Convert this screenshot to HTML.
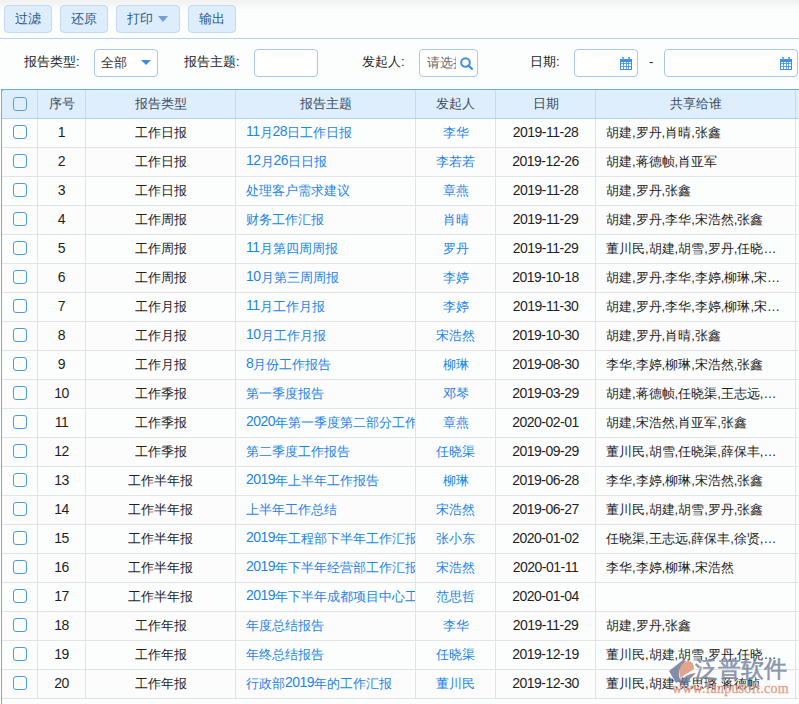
<!DOCTYPE html><html><head><meta charset="utf-8"><style>*{margin:0;padding:0;box-sizing:border-box}
html,body{width:799px;height:704px;overflow:hidden;background:#fcfefd;font-family:"Liberation Sans",sans-serif;font-size:13px;color:#333}
.top{position:absolute;left:0;top:0;width:799px;height:39px;background:linear-gradient(#f1f1f1 0,#f7f7f7 5px,#fbfcfc 10px,#fcfefd 14px,#fcfefd);border-bottom:1px solid #b9d2ea}
.btn{position:absolute;top:5px;height:28px;background:#deedfc;border:1px solid #c2d9ef;border-radius:4px;color:#2a5889;text-align:center;line-height:25px;font-size:13px}
.filter{position:absolute;left:0;top:39px;width:799px;height:50px;background:#fcfefd}
.lbl{position:absolute;top:14px;line-height:18px;color:#222}
.inp{position:absolute;top:10px;height:28px;border:1px solid #a9c8e8;border-radius:4px;background:#fff}
table{position:absolute;left:1px;top:89px;border-collapse:collapse;table-layout:fixed;width:824px}
th{height:29px;background:#dfeefc;color:#3b4c63;padding-bottom:1px;font-weight:normal;border:1px solid #c4dbef;border-bottom-color:#b5d2ec}
td{height:29px;border:1px solid #e3e3e3;text-align:center;white-space:nowrap;overflow:hidden;color:#1e1e1e;padding-bottom:1px}
td.c3,td.c4{color:#1e84ea}
tr:nth-child(even) td{background:#fcfefe}
tr:nth-child(odd) td{background:#fdfcfc}
td.c3{text-align:left;padding-left:10px}
td.c3 div{overflow:hidden;white-space:nowrap}
td.c6{text-align:left;padding-left:10px}
td.c6 div{overflow:hidden;white-space:nowrap;text-overflow:ellipsis}
.cb{display:inline-block;width:14px;height:14px;border:1px solid #4a9be0;border-radius:3px;background:transparent;vertical-align:middle;position:relative;top:-1px}
th .cb{border-color:#5f9bd3;top:0}
th:first-child,td.c0{border-left:1px solid #6daee6}
th{border-top:1px solid #6aaae2}

.n{font-size:14px;letter-spacing:-0.5px;position:relative;top:-1px}
</style></head><body><div class="top">
<div class="btn" style="left:4px;width:48px">过滤</div>
<div class="btn" style="left:60px;width:48px">还原</div>
<div class="btn" style="left:116px;width:64px"><span style="position:absolute;left:10px;top:0">打印</span><i style="position:absolute;left:41px;top:10px;width:0;height:0;border-left:5px solid transparent;border-right:5px solid transparent;border-top:6px solid #6f9fd3"></i></div>
<div class="btn" style="left:188px;width:48px">输出</div>
</div>
<div class="filter">
<span class="lbl" style="left:24px">报告类型:</span>
<div class="inp" style="left:94px;width:64px"><span style="position:absolute;left:6px;top:4px">全部</span><i style="position:absolute;left:46px;top:10px;width:0;height:0;border-left:5px solid transparent;border-right:5px solid transparent;border-top:5px solid #3d8de0"></i></div>
<span class="lbl" style="left:184px">报告主题:</span>
<div class="inp" style="left:254px;width:64px"></div>
<span class="lbl" style="left:362px">发起人:</span>
<div class="inp" style="left:419px;width:59px;overflow:hidden"><span style="position:absolute;left:7px;top:4px;width:29px;overflow:hidden;white-space:nowrap;color:#666">请选择</span><svg width="14" height="14" viewBox="0 0 14 14" style="position:absolute;left:39px;top:6px"><circle cx="6.5" cy="6.5" r="4.3" fill="none" stroke="#3b8fe0" stroke-width="2"/><line x1="9.5" y1="9.5" x2="13" y2="13" stroke="#3b8fe0" stroke-width="2.2" stroke-linecap="round"/></svg></div>
<span class="lbl" style="left:530px">日期:</span>
<div class="inp" style="left:574px;width:64px"><svg width="12" height="13" viewBox="0 0 12 13" style="position:absolute;left:45px;top:7px"><g fill="#3f90e0"><rect x="2" y="0" width="2" height="3"/><rect x="8" y="0" width="2" height="3"/><rect x="0" y="2" width="12" height="3"/><rect x="0" y="2" width="1" height="11"/><rect x="11" y="2" width="1" height="11"/><rect x="0" y="12" width="12" height="1"/><rect x="0" y="6" width="12" height="1" opacity=".8"/><rect x="0" y="9" width="12" height="1" opacity=".8"/><rect x="3" y="5" width="1" height="8" opacity=".8"/><rect x="6" y="5" width="1" height="8" opacity=".8"/><rect x="8" y="5" width="1" height="8" opacity=".8"/></g><g fill="#fff" opacity=".9"><rect x="2.6" y="0.6" width="0.8" height="1.6"/><rect x="8.6" y="0.6" width="0.8" height="1.6"/></g></svg></div>
<span class="lbl" style="left:649px">-</span>
<div class="inp" style="left:664px;width:134px"><svg width="12" height="13" viewBox="0 0 12 13" style="position:absolute;left:115px;top:7px"><g fill="#3f90e0"><rect x="2" y="0" width="2" height="3"/><rect x="8" y="0" width="2" height="3"/><rect x="0" y="2" width="12" height="3"/><rect x="0" y="2" width="1" height="11"/><rect x="11" y="2" width="1" height="11"/><rect x="0" y="12" width="12" height="1"/><rect x="0" y="6" width="12" height="1" opacity=".8"/><rect x="0" y="9" width="12" height="1" opacity=".8"/><rect x="3" y="5" width="1" height="8" opacity=".8"/><rect x="6" y="5" width="1" height="8" opacity=".8"/><rect x="8" y="5" width="1" height="8" opacity=".8"/></g><g fill="#fff" opacity=".9"><rect x="2.6" y="0.6" width="0.8" height="1.6"/><rect x="8.6" y="0.6" width="0.8" height="1.6"/></g></svg></div>
</div>
<table>
<colgroup><col style="width:36px"><col style="width:48px"><col style="width:150px"><col style="width:180px"><col style="width:80px"><col style="width:100px"><col style="width:200px"><col style="width:30px"></colgroup>
<tr><th><i class="cb"></i></th><th>序号</th><th>报告类型</th><th>报告主题</th><th>发起人</th><th>日期</th><th>共享给谁</th><th></th></tr>
<tr><td class="c0"><i class="cb"></i></td><td class="c1"><span class="n">1</span></td><td class="c2">工作日报</td><td class="c3"><div><span class="n">11</span>月<span class="n">28</span>日工作日报</div></td><td class="c4">李华</td><td class="c5"><span class="n">2019-11-28</span></td><td class="c6"><div>胡建,罗丹,肖晴,张鑫</div></td><td class="c7"></td></tr>
<tr><td class="c0"><i class="cb"></i></td><td class="c1"><span class="n">2</span></td><td class="c2">工作日报</td><td class="c3"><div><span class="n">12</span>月<span class="n">26</span>日日报</div></td><td class="c4">李若若</td><td class="c5"><span class="n">2019-12-26</span></td><td class="c6"><div>胡建,蒋德帧,肖亚军</div></td><td class="c7"></td></tr>
<tr><td class="c0"><i class="cb"></i></td><td class="c1"><span class="n">3</span></td><td class="c2">工作日报</td><td class="c3"><div>处理客户需求建议</div></td><td class="c4">章燕</td><td class="c5"><span class="n">2019-11-28</span></td><td class="c6"><div>胡建,罗丹,张鑫</div></td><td class="c7"></td></tr>
<tr><td class="c0"><i class="cb"></i></td><td class="c1"><span class="n">4</span></td><td class="c2">工作周报</td><td class="c3"><div>财务工作汇报</div></td><td class="c4">肖晴</td><td class="c5"><span class="n">2019-11-29</span></td><td class="c6"><div>胡建,罗丹,李华,宋浩然,张鑫</div></td><td class="c7"></td></tr>
<tr><td class="c0"><i class="cb"></i></td><td class="c1"><span class="n">5</span></td><td class="c2">工作周报</td><td class="c3"><div><span class="n">11</span>月第四周周报</div></td><td class="c4">罗丹</td><td class="c5"><span class="n">2019-11-29</span></td><td class="c6"><div>董川民,胡建,胡雪,罗丹,任晓…</div></td><td class="c7"></td></tr>
<tr><td class="c0"><i class="cb"></i></td><td class="c1"><span class="n">6</span></td><td class="c2">工作周报</td><td class="c3"><div><span class="n">10</span>月第三周周报</div></td><td class="c4">李婷</td><td class="c5"><span class="n">2019-10-18</span></td><td class="c6"><div>胡建,罗丹,李华,李婷,柳琳,宋…</div></td><td class="c7"></td></tr>
<tr><td class="c0"><i class="cb"></i></td><td class="c1"><span class="n">7</span></td><td class="c2">工作月报</td><td class="c3"><div><span class="n">11</span>月工作月报</div></td><td class="c4">李婷</td><td class="c5"><span class="n">2019-11-30</span></td><td class="c6"><div>胡建,罗丹,李华,李婷,柳琳,宋…</div></td><td class="c7"></td></tr>
<tr><td class="c0"><i class="cb"></i></td><td class="c1"><span class="n">8</span></td><td class="c2">工作月报</td><td class="c3"><div><span class="n">10</span>月工作月报</div></td><td class="c4">宋浩然</td><td class="c5"><span class="n">2019-10-30</span></td><td class="c6"><div>胡建,罗丹,肖晴,张鑫</div></td><td class="c7"></td></tr>
<tr><td class="c0"><i class="cb"></i></td><td class="c1"><span class="n">9</span></td><td class="c2">工作月报</td><td class="c3"><div><span class="n">8</span>月份工作报告</div></td><td class="c4">柳琳</td><td class="c5"><span class="n">2019-08-30</span></td><td class="c6"><div>李华,李婷,柳琳,宋浩然,张鑫</div></td><td class="c7"></td></tr>
<tr><td class="c0"><i class="cb"></i></td><td class="c1"><span class="n">10</span></td><td class="c2">工作季报</td><td class="c3"><div>第一季度报告</div></td><td class="c4">邓琴</td><td class="c5"><span class="n">2019-03-29</span></td><td class="c6"><div>胡建,蒋德帧,任晓渠,王志远,…</div></td><td class="c7"></td></tr>
<tr><td class="c0"><i class="cb"></i></td><td class="c1"><span class="n">11</span></td><td class="c2">工作季报</td><td class="c3"><div><span class="n">2020</span>年第一季度第二部分工作报告</div></td><td class="c4">章燕</td><td class="c5"><span class="n">2020-02-01</span></td><td class="c6"><div>胡建,宋浩然,肖亚军,张鑫</div></td><td class="c7"></td></tr>
<tr><td class="c0"><i class="cb"></i></td><td class="c1"><span class="n">12</span></td><td class="c2">工作季报</td><td class="c3"><div>第二季度工作报告</div></td><td class="c4">任晓渠</td><td class="c5"><span class="n">2019-09-29</span></td><td class="c6"><div>董川民,胡雪,任晓渠,薛保丰,…</div></td><td class="c7"></td></tr>
<tr><td class="c0"><i class="cb"></i></td><td class="c1"><span class="n">13</span></td><td class="c2">工作半年报</td><td class="c3"><div><span class="n">2019</span>年上半年工作报告</div></td><td class="c4">柳琳</td><td class="c5"><span class="n">2019-06-28</span></td><td class="c6"><div>李华,李婷,柳琳,宋浩然,张鑫</div></td><td class="c7"></td></tr>
<tr><td class="c0"><i class="cb"></i></td><td class="c1"><span class="n">14</span></td><td class="c2">工作半年报</td><td class="c3"><div>上半年工作总结</div></td><td class="c4">宋浩然</td><td class="c5"><span class="n">2019-06-27</span></td><td class="c6"><div>董川民,胡建,胡雪,罗丹,张鑫</div></td><td class="c7"></td></tr>
<tr><td class="c0"><i class="cb"></i></td><td class="c1"><span class="n">15</span></td><td class="c2">工作半年报</td><td class="c3"><div><span class="n">2019</span>年工程部下半年工作汇报</div></td><td class="c4">张小东</td><td class="c5"><span class="n">2020-01-02</span></td><td class="c6"><div>任晓渠,王志远,薛保丰,徐贤,…</div></td><td class="c7"></td></tr>
<tr><td class="c0"><i class="cb"></i></td><td class="c1"><span class="n">16</span></td><td class="c2">工作半年报</td><td class="c3"><div><span class="n">2019</span>年下半年经营部工作汇报</div></td><td class="c4">宋浩然</td><td class="c5"><span class="n">2020-01-11</span></td><td class="c6"><div>李华,李婷,柳琳,宋浩然</div></td><td class="c7"></td></tr>
<tr><td class="c0"><i class="cb"></i></td><td class="c1"><span class="n">17</span></td><td class="c2">工作半年报</td><td class="c3"><div><span class="n">2019</span>年下半年成都项目中心工作汇报</div></td><td class="c4">范思哲</td><td class="c5"><span class="n">2020-01-04</span></td><td class="c6"><div></div></td><td class="c7"></td></tr>
<tr><td class="c0"><i class="cb"></i></td><td class="c1"><span class="n">18</span></td><td class="c2">工作年报</td><td class="c3"><div>年度总结报告</div></td><td class="c4">李华</td><td class="c5"><span class="n">2019-11-29</span></td><td class="c6"><div>胡建,罗丹,张鑫</div></td><td class="c7"></td></tr>
<tr><td class="c0"><i class="cb"></i></td><td class="c1"><span class="n">19</span></td><td class="c2">工作年报</td><td class="c3"><div>年终总结报告</div></td><td class="c4">任晓渠</td><td class="c5"><span class="n">2019-12-19</span></td><td class="c6"><div>董川民,胡建,胡雪,罗丹,任晓…</div></td><td class="c7"></td></tr>
<tr><td class="c0"><i class="cb"></i></td><td class="c1"><span class="n">20</span></td><td class="c2">工作年报</td><td class="c3"><div>行政部<span class="n">2019</span>年的工作汇报</div></td><td class="c4">董川民</td><td class="c5"><span class="n">2019-12-30</span></td><td class="c6"><div>董川民,胡建,黄思璐,蒋德帧</div></td><td class="c7"></td></tr>
</table>
<div style="position:absolute;left:1px;top:89px;width:820px;height:640px;border-top:1px solid #6aaae2;border-left:1px solid #6daee6;border-top-left-radius:3px;pointer-events:none"></div>
<div style="position:absolute;left:0;top:88px;width:4px;height:4px;background:#fcfefd;z-index:-1"></div>
<div style="position:absolute;left:664px;top:652px;width:135px;height:52px;pointer-events:none">
<svg width="40" height="40" viewBox="0 0 40 40" style="position:absolute;left:0;top:0"><path d="M19 8 L5 19 L12 31 L17 29 Q11 19 22 9 Z" fill="#6b7a99" opacity=".85"/><path d="M16 26 Q13 11 24 9 Q30 9 30 17 Z" fill="#de9a80" opacity=".9"/><path d="M15 31 Q22 21 32 21 Q26 26 22 33 Z" fill="#6b7a99" opacity=".8"/></svg>
<div style="position:absolute;left:31px;top:2px;font-size:23px;line-height:30px;color:#7f8ba4;opacity:.9;-webkit-text-stroke:0.6px #7f8ba4;white-space:nowrap">泛普软件</div>
<div style="position:absolute;left:8px;top:29px;font-family:'Liberation Serif',serif;font-size:14px;line-height:16px;color:#e09a80;opacity:.9;letter-spacing:0.2px;-webkit-text-stroke:0.35px #e09a80;white-space:nowrap">www.fanpusoft.com</div>
</div>
</body></html>
